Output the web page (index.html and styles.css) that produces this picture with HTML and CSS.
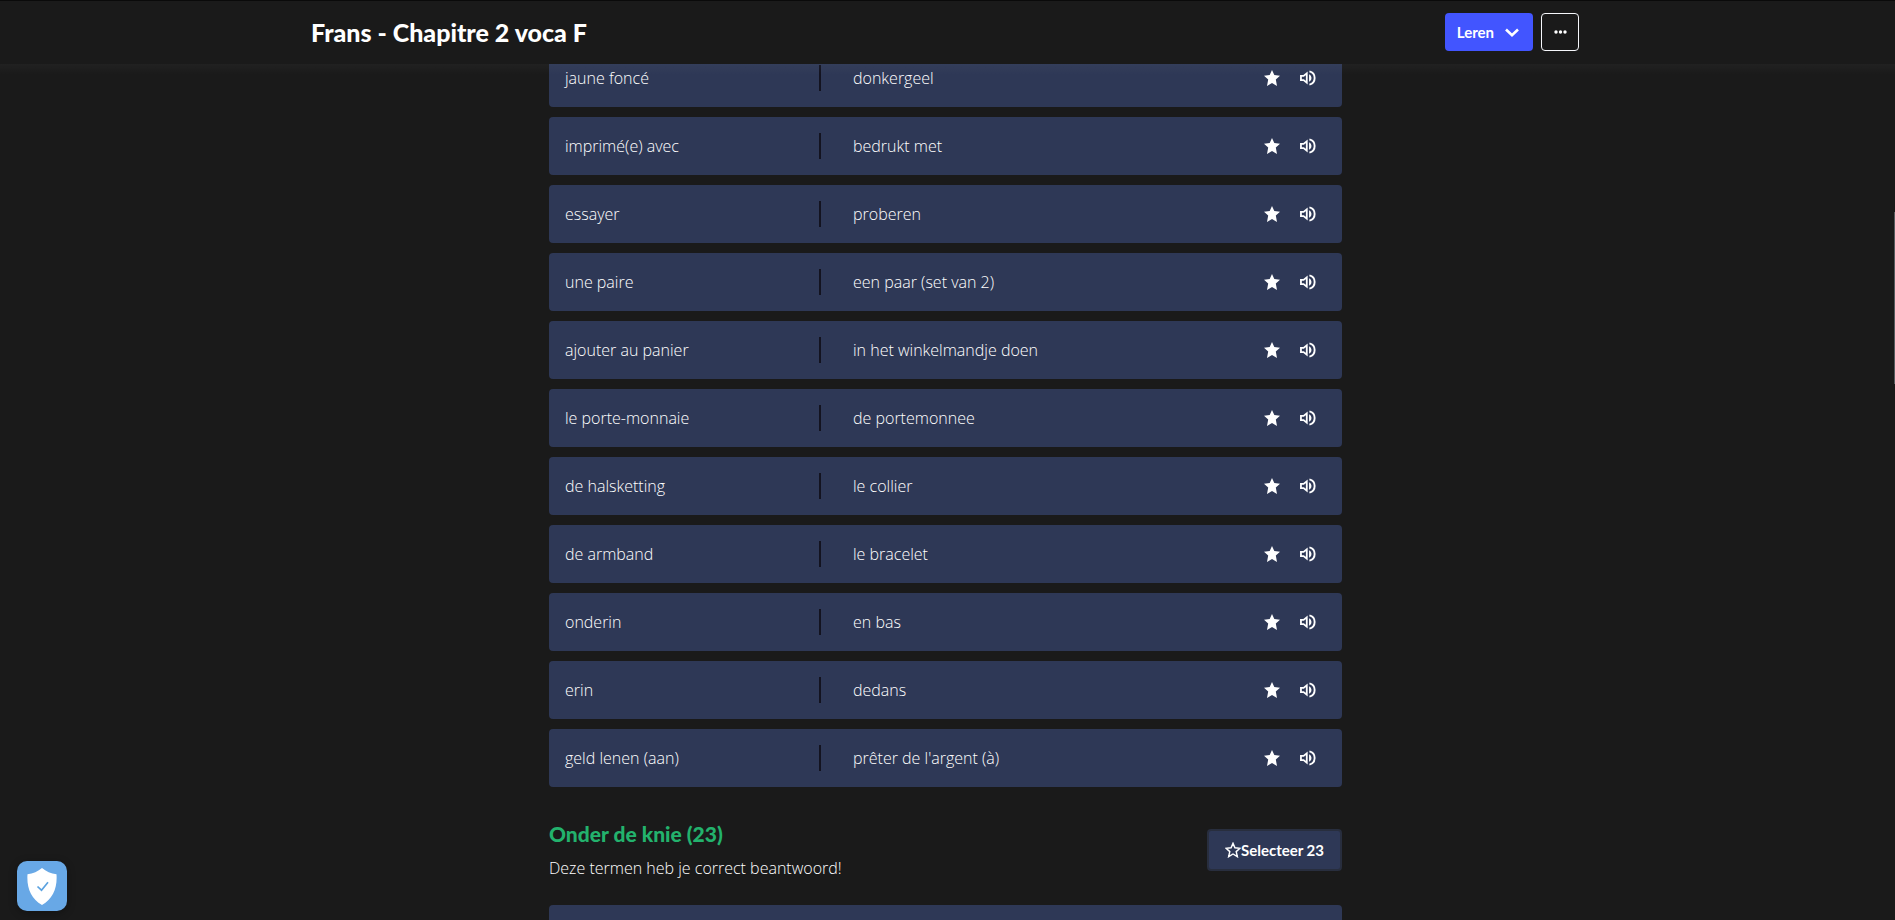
FILE: index.html
```html
<!DOCTYPE html>
<html lang="nl">
<head>
<meta charset="utf-8">
<meta name="viewport" content="width=device-width, initial-scale=1">
<title>Frans - Chapitre 2 voca F</title>
<link rel="stylesheet" href="styles.css">
</head>
<body>
<svg class="sprite" aria-hidden="true">
  <symbol id="star" viewBox="0 0 16 16"><path d="M8 0l2.300 5 5.700.7-4.200 3.900L13 16 8 13 3 16l1.200-6.400L0 5.700 5.700 5z"/></symbol>
  <symbol id="star-line" viewBox="0 0 24 24"><path d="M12 2l2.900 6.600 7.600.8-5.700 5 1.700 7.600L12 18l-6.500 4 1.700-7.600-5.700-5 7.600-.8z" fill="none" stroke="currentColor" stroke-width="2.200"/></symbol>
  <symbol id="speaker" viewBox="0 0 17 16"><path d="M1 5.700h2.800L7.200 3v10L3.800 10.300H1z" fill="none" stroke="currentColor" stroke-width="1.900"/><path d="M9.600 4c3.400 1.500 3.400 6.500 0 8z"/><path d="M10 1c7.400 1.800 7.400 12.200 0 14" fill="none" stroke="currentColor" stroke-width="2"/></symbol>
</svg>
<header class="topbar">
  <div class="topbar-inner">
    <h1 class="title">Frans - Chapitre 2 voca F</h1>
    <div class="actions">
      <button class="learn" type="button">Leren
        <svg class="chevron" viewBox="0 0 14 9" aria-hidden="true"><path d="M1 1.500L7 7.200l6-5.700" fill="none" stroke="currentColor" stroke-width="2.600"/></svg>
      </button>
      <button class="more" type="button" aria-label="Meer"><svg class="dots" viewBox="0 0 13 4" aria-hidden="true"><circle cx="2" cy="2" r="1.700"/><circle cx="6.500" cy="2" r="1.700"/><circle cx="11" cy="2" r="1.700"/></svg></button>
    </div>
  </div>
</header>
<main class="content">
  <ul class="terms" id="terms"></ul>
  <section class="known">
    <div class="known-head">
      <div class="known-text">
        <h2 class="known-title">Onder de knie (23)</h2>
        <p class="known-note">Deze termen heb je correct beantwoord!</p>
      </div>
      <button class="select" type="button"><svg class="select-star" aria-hidden="true"><use href="#star-line"/></svg>Selecteer 23</button>
    </div>
    <ul class="terms"><li class="term"></li></ul>
  </section>
</main>
<button class="shield" type="button" aria-label="Privacy">
  <svg class="shield-icon" viewBox="0 0 30 37" aria-hidden="true"><path d="M15 0c4 3.500 9 5.500 14.500 6.200C30.500 20 26 31 15 37 4 31-.5 20 .5 6.200 6 5.500 11 3.500 15 0z" fill="#fff"/><path d="M10.500 18.500l4 3.700 6.500-8" fill="none" stroke="#5ba2e0" stroke-width="1.700"/></svg>
</button>
<div class="thumb"></div>
<script src="app.js"></script>
</body>
</html>
```
FILE: app.js
```js
const terms = [
  ["jaune foncé", "donkergeel"],
  ["imprimé(e) avec", "bedrukt met"],
  ["essayer", "proberen"],
  ["une paire", "een paar (set van 2)"],
  ["ajouter au panier", "in het winkelmandje doen"],
  ["le porte-monnaie", "de portemonnee"],
  ["de halsketting", "le collier"],
  ["de armband", "le bracelet"],
  ["onderin", "en bas"],
  ["erin", "dedans"],
  ["geld lenen (aan)", "prêter de l'argent (à)"]
];
document.getElementById("terms").innerHTML = terms.map(([word, meaning]) => `
  <li class="term">
    <span class="word">${word}</span>
    <span class="meaning">${meaning}</span>
    <button class="icon" type="button" aria-label="Ster"><svg aria-hidden="true"><use href="#star"/></svg></button>
    <button class="icon" type="button" aria-label="Uitspraak"><svg aria-hidden="true"><use href="#speaker"/></svg></button>
  </li>`).join("");
```
FILE: styles.css
```css
* { box-sizing: border-box; }

html, body { height: 100%; }

body {
  margin: 0;
  padding-right: 4px;
  overflow: hidden;
  background: #1a1a1a;
  color: #fff;
  font: 300 16px/24px "Open Sans", Lato, sans-serif;
}

button { font: inherit; color: inherit; cursor: pointer; }

.sprite { position: absolute; width: 0; height: 0; }

.topbar {
  position: fixed;
  z-index: 2;
  inset: 0 0 auto 0;
  height: 64px;
  padding: 0 5px 1px 0;
  border-top: 1px solid #0a0a0a;
  background: #1a1a1a;
}

.topbar::after {
  content: "";
  position: absolute;
  top: 100%;
  left: 0;
  right: 0;
  height: 12px;
  background: linear-gradient(rgba(255, 255, 255, .03), rgba(255, 255, 255, 0));
}

.topbar-inner {
  display: flex;
  align-items: center;
  justify-content: space-between;
  max-width: 1268px;
  height: 100%;
  margin: 0 auto;
}

.title, .known-title, .learn, .select { font-family: Lato, "Open Sans", sans-serif; }

.title { margin: 0; font-size: 25px; line-height: 32px; font-weight: 900; }

.actions { display: flex; gap: 8px; }

.learn {
  display: flex;
  align-items: center;
  gap: 11px;
  height: 38px;
  padding: 0 14px 0 12px;
  border: 0;
  border-radius: 4px;
  background: #4255ff;
  font-size: 15px;
  font-weight: 700;
}

.chevron { width: 14px; height: 9px; }

.more {
  display: grid;
  place-items: center;
  width: 38px;
  height: 38px;
  padding: 0;
  border: 1px solid #f6f7fb;
  border-radius: 4px;
  background: none;
}

.dots { width: 13px; height: 4px; fill: currentColor; }

.content { max-width: 793px; margin: 0 auto; padding-top: 49px; }

.terms {
  display: flex;
  flex-direction: column;
  gap: 10px;
  margin: 0;
  padding: 0;
  list-style: none;
}

.term {
  display: flex;
  align-items: center;
  min-height: 58px;
  padding: 16px 26px 16px 16px;
  border-radius: 4px;
  background: #2e3856;
}

.word { flex: 0 0 256px; line-height: 26px; border-right: 2px solid #131320; }

.meaning { flex: 1; padding-left: 32px; line-height: 26px; }

.icon {
  display: grid;
  place-items: center;
  margin-left: 20px;
  padding: 0;
  border: 0;
  background: none;
}

.icon svg { width: 16px; height: 16px; fill: currentColor; }

.known { padding-top: 34px; }

.known-head {
  display: flex;
  align-items: center;
  justify-content: space-between;
  padding-bottom: 26px;
}

.known-title { margin: 0 0 10px; color: #23b26d; font-size: 21px; line-height: 26px; font-weight: 900; }

.known-note { margin: 0; line-height: 22px; }

.select {
  display: flex;
  align-items: center;
  justify-content: center;
  height: 42px;
  padding: 0 16px;
  border: 2px solid #282e3e;
  border-radius: 4px;
  background: #2e3856;
  font-size: 15px;
  font-weight: 700;
}

.select-star { width: 16px; height: 16px; }

.shield {
  position: fixed;
  left: 17px;
  bottom: 9px;
  display: grid;
  place-items: center;
  width: 50px;
  height: 50px;
  padding: 0;
  border: 0;
  border-radius: 10px;
  background: #68a8e6;
  box-shadow: 0 2px 8px rgba(0, 0, 0, .3);
}

.shield-icon { width: 30px; height: 37px; }

.thumb {
  position: fixed;
  top: 212px;
  right: 0;
  width: 1px;
  height: 172px;
  background: #555b5e;
}
```
